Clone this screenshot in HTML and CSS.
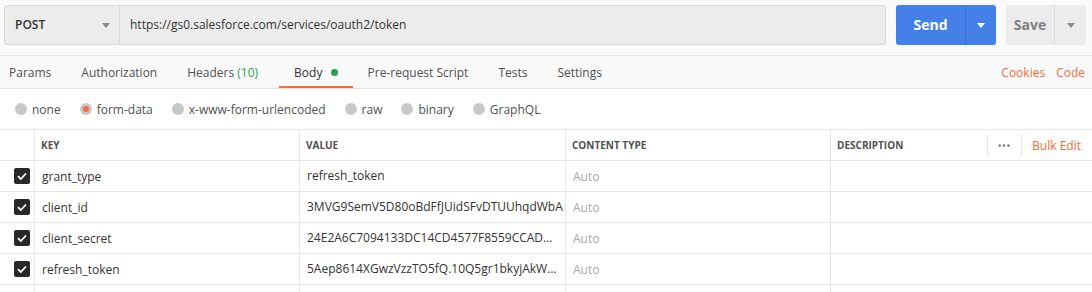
FILE: index.html
```html
<!DOCTYPE html>
<html lang="en">
<head>
	<meta charset="UTF-8">
	<title>Request</title>
	<link rel="stylesheet" href="styles.css">
</head>
<body>
	<div class="topbar">
		<div class="request">
			<div class="method">POST<span class="caret"></span></div>
			<div class="url">https://gs0.salesforce.com/services/oauth2/token</div>
		</div>
		<div class="send">
			<span class="send-main">Send</span>
			<span class="send-arrow"><span class="caret white"></span></span>
		</div>
		<div class="save">
			<span class="save-main">Save</span>
			<span class="save-arrow"><span class="caret"></span></span>
		</div>
	</div>

	<div class="tabs">
		<div class="tab-list">
			<span class="tab first">Params</span>
			<span class="tab">Authorization</span>
			<span class="tab headers">Headers <span class="count">(10)</span></span>
			<span class="tab active">Body <span class="dot"></span></span>
			<span class="tab">Pre-request Script</span>
			<span class="tab">Tests</span>
			<span class="tab">Settings</span>
		</div>
		<div class="links">
			<span class="link">Cookies</span>
			<span class="link">Code</span>
		</div>
	</div>

	<div class="modes">
		<span class="mode"><span class="radio"></span>none</span>
		<span class="mode"><span class="radio on"></span>form-data</span>
		<span class="mode"><span class="radio"></span>x-www-form-urlencoded</span>
		<span class="mode"><span class="radio"></span>raw</span>
		<span class="mode"><span class="radio"></span>binary</span>
		<span class="mode"><span class="radio"></span>GraphQL</span>
	</div>

	<div class="grid">
		<div class="cell head"></div>
		<div class="cell head">KEY</div>
		<div class="cell head">VALUE</div>
		<div class="cell head">CONTENT TYPE</div>
		<div class="cell head desc">
			<span>DESCRIPTION</span>
			<span class="tools"><span class="more">&bull;&bull;&bull;</span><span class="bulk">Bulk Edit</span></span>
		</div>

		<div class="cell"><span class="check"><svg width="10" height="8" viewBox="0 0 10 8"><path d="M1 4.2 L3.8 7 L9 1.5" fill="none" stroke="#fff" stroke-width="1.8"/></svg></span></div>
		<div class="cell">grant_type</div>
		<div class="cell">refresh_token</div>
		<div class="cell muted">Auto</div>
		<div class="cell"></div>

		<div class="cell"><span class="check"><svg width="10" height="8" viewBox="0 0 10 8"><path d="M1 4.2 L3.8 7 L9 1.5" fill="none" stroke="#fff" stroke-width="1.8"/></svg></span></div>
		<div class="cell">client_id</div>
		<div class="cell clip">3MVG9SemV5D80oBdFfJUidSFvDTUUhqdWbA</div>
		<div class="cell muted">Auto</div>
		<div class="cell"></div>

		<div class="cell"><span class="check"><svg width="10" height="8" viewBox="0 0 10 8"><path d="M1 4.2 L3.8 7 L9 1.5" fill="none" stroke="#fff" stroke-width="1.8"/></svg></span></div>
		<div class="cell">client_secret</div>
		<div class="cell">24E2A6C7094133DC14CD4577F8559CCAD9F1E</div>
		<div class="cell muted">Auto</div>
		<div class="cell"></div>

		<div class="cell"><span class="check"><svg width="10" height="8" viewBox="0 0 10 8"><path d="M1 4.2 L3.8 7 L9 1.5" fill="none" stroke="#fff" stroke-width="1.8"/></svg></span></div>
		<div class="cell">refresh_token</div>
		<div class="cell">5Aep8614XGwzVzzTO5fQ.10Q5gr1bkyjAkWxyz</div>
		<div class="cell muted">Auto</div>
		<div class="cell"></div>

		<div class="cell"></div>
		<div class="cell"></div>
		<div class="cell"></div>
		<div class="cell"></div>
		<div class="cell"></div>
	</div>
</body>
</html>
```

FILE: styles.css
```css
* { box-sizing: border-box; }
body { margin: 0; background: #fff; font-family: "Open Sans", "Liberation Sans", sans-serif; font-size: 12px; color: #505050; overflow: hidden; }

.topbar { display: flex; height: 55px; padding: 5px 6px 10px 4px; background: #fafafa; }
.request { display: flex; width: 882px; height: 40px; border: 1px solid #d9d9d9; border-radius: 3px; background: #ececec; }
.method { position: relative; width: 115px; border-right: 1px solid #d9d9d9; padding-left: 10px; line-height: 38px; font-weight: 600; color: #333; }
.method .caret { position: absolute; left: 97px; top: 17px; }
.url { padding-left: 10px; line-height: 38px; color: #333; }

.caret { display: inline-block; width: 0; height: 0; border-left: 4px solid transparent; border-right: 4px solid transparent; border-top: 5px solid #8a8a8a; }
.caret.white { border-top-color: #fff; }

.send { display: flex; margin-left: 10px; width: 100px; height: 40px; border-radius: 3px; background: #4580e8; color: #fff; font-size: 14px; font-weight: 700; }
.send-main { width: 70px; text-align: center; line-height: 40px; border-right: 1px solid #3a70d0; }
.send-arrow { flex: 1; display: flex; align-items: center; justify-content: center; }
.save { display: flex; margin-left: 10px; width: 80px; height: 40px; border-radius: 3px; background: #ececec; color: #808080; font-size: 14px; font-weight: 700; }
.save-main { width: 49px; text-align: center; line-height: 40px; border-right: 1px solid #dcdcdc; }
.save-arrow { flex: 1; display: flex; align-items: center; justify-content: center; }

.tabs { display: flex; justify-content: space-between; height: 34px; border-top: 1px solid #e6e6e6; border-bottom: 1px solid #e6e6e6; background: #fafafa; }
.tab-list { display: flex; }
.tab { display: flex; align-items: center; padding: 0 15px; height: 32px; white-space: pre; }
.tab.first { padding-left: 9px; }
.tab.headers { padding-right: 21px; }
.tab.active { border-bottom: 2px solid #f26b3a; padding-top: 2px; color: #333; }
.count { color: #26a04a; }
.dot { display: inline-block; width: 7px; height: 7px; border-radius: 50%; background: #26a04a; margin-left: 5px; }
.links { display: flex; align-items: center; padding-right: 7px; }
.link { color: #f26b3a; margin-left: 11px; }

.modes { display: flex; align-items: center; height: 40px; padding-left: 15px; }
.mode { display: flex; align-items: center; margin-right: 19px; }
.radio { position: relative; width: 12px; height: 12px; border-radius: 50%; background: #c8c8c8; margin-right: 5px; }
.radio.on::after { content: ""; position: absolute; left: 3px; top: 3px; width: 6px; height: 6px; border-radius: 50%; background: #f26b3a; }

.grid { display: grid; grid-template-columns: 35px 265px 266px 265px 1fr; grid-auto-rows: 31px; border-top: 1px solid #e6e6e6; }
.cell { display: flex; align-items: center; padding: 0 8px 0 7px; border-right: 1px solid #e6e6e6; border-bottom: 1px solid #e6e6e6; color: #333; white-space: nowrap; overflow: hidden; text-overflow: ellipsis; }
.cell:nth-child(5n) { border-right: none; }
.cell:nth-child(5n+1) { padding: 0 0 0 14px; }
.cell:nth-child(5n+3) { display: block; line-height: 30px; }
.cell.clip { text-overflow: clip; }
.cell.muted { color: #a8a8a8; }
.head { font-size: 10px; font-weight: 700; color: #505050; padding-left: 6px; }
.desc { justify-content: space-between; padding-right: 11px; }
.tools { display: flex; align-items: center; height: 21px; }
.more { height: 21px; line-height: 21px; padding: 0 10px; border-left: 1px solid #e6e6e6; border-right: 1px solid #e6e6e6; color: #888; font-size: 9px; letter-spacing: 1px; }
.bulk { margin-left: 10px; font-size: 12px; font-weight: 400; color: #f26b3a; }
.check { display: flex; align-items: center; justify-content: center; width: 16px; height: 16px; border-radius: 2px; background: #282828; }
```
